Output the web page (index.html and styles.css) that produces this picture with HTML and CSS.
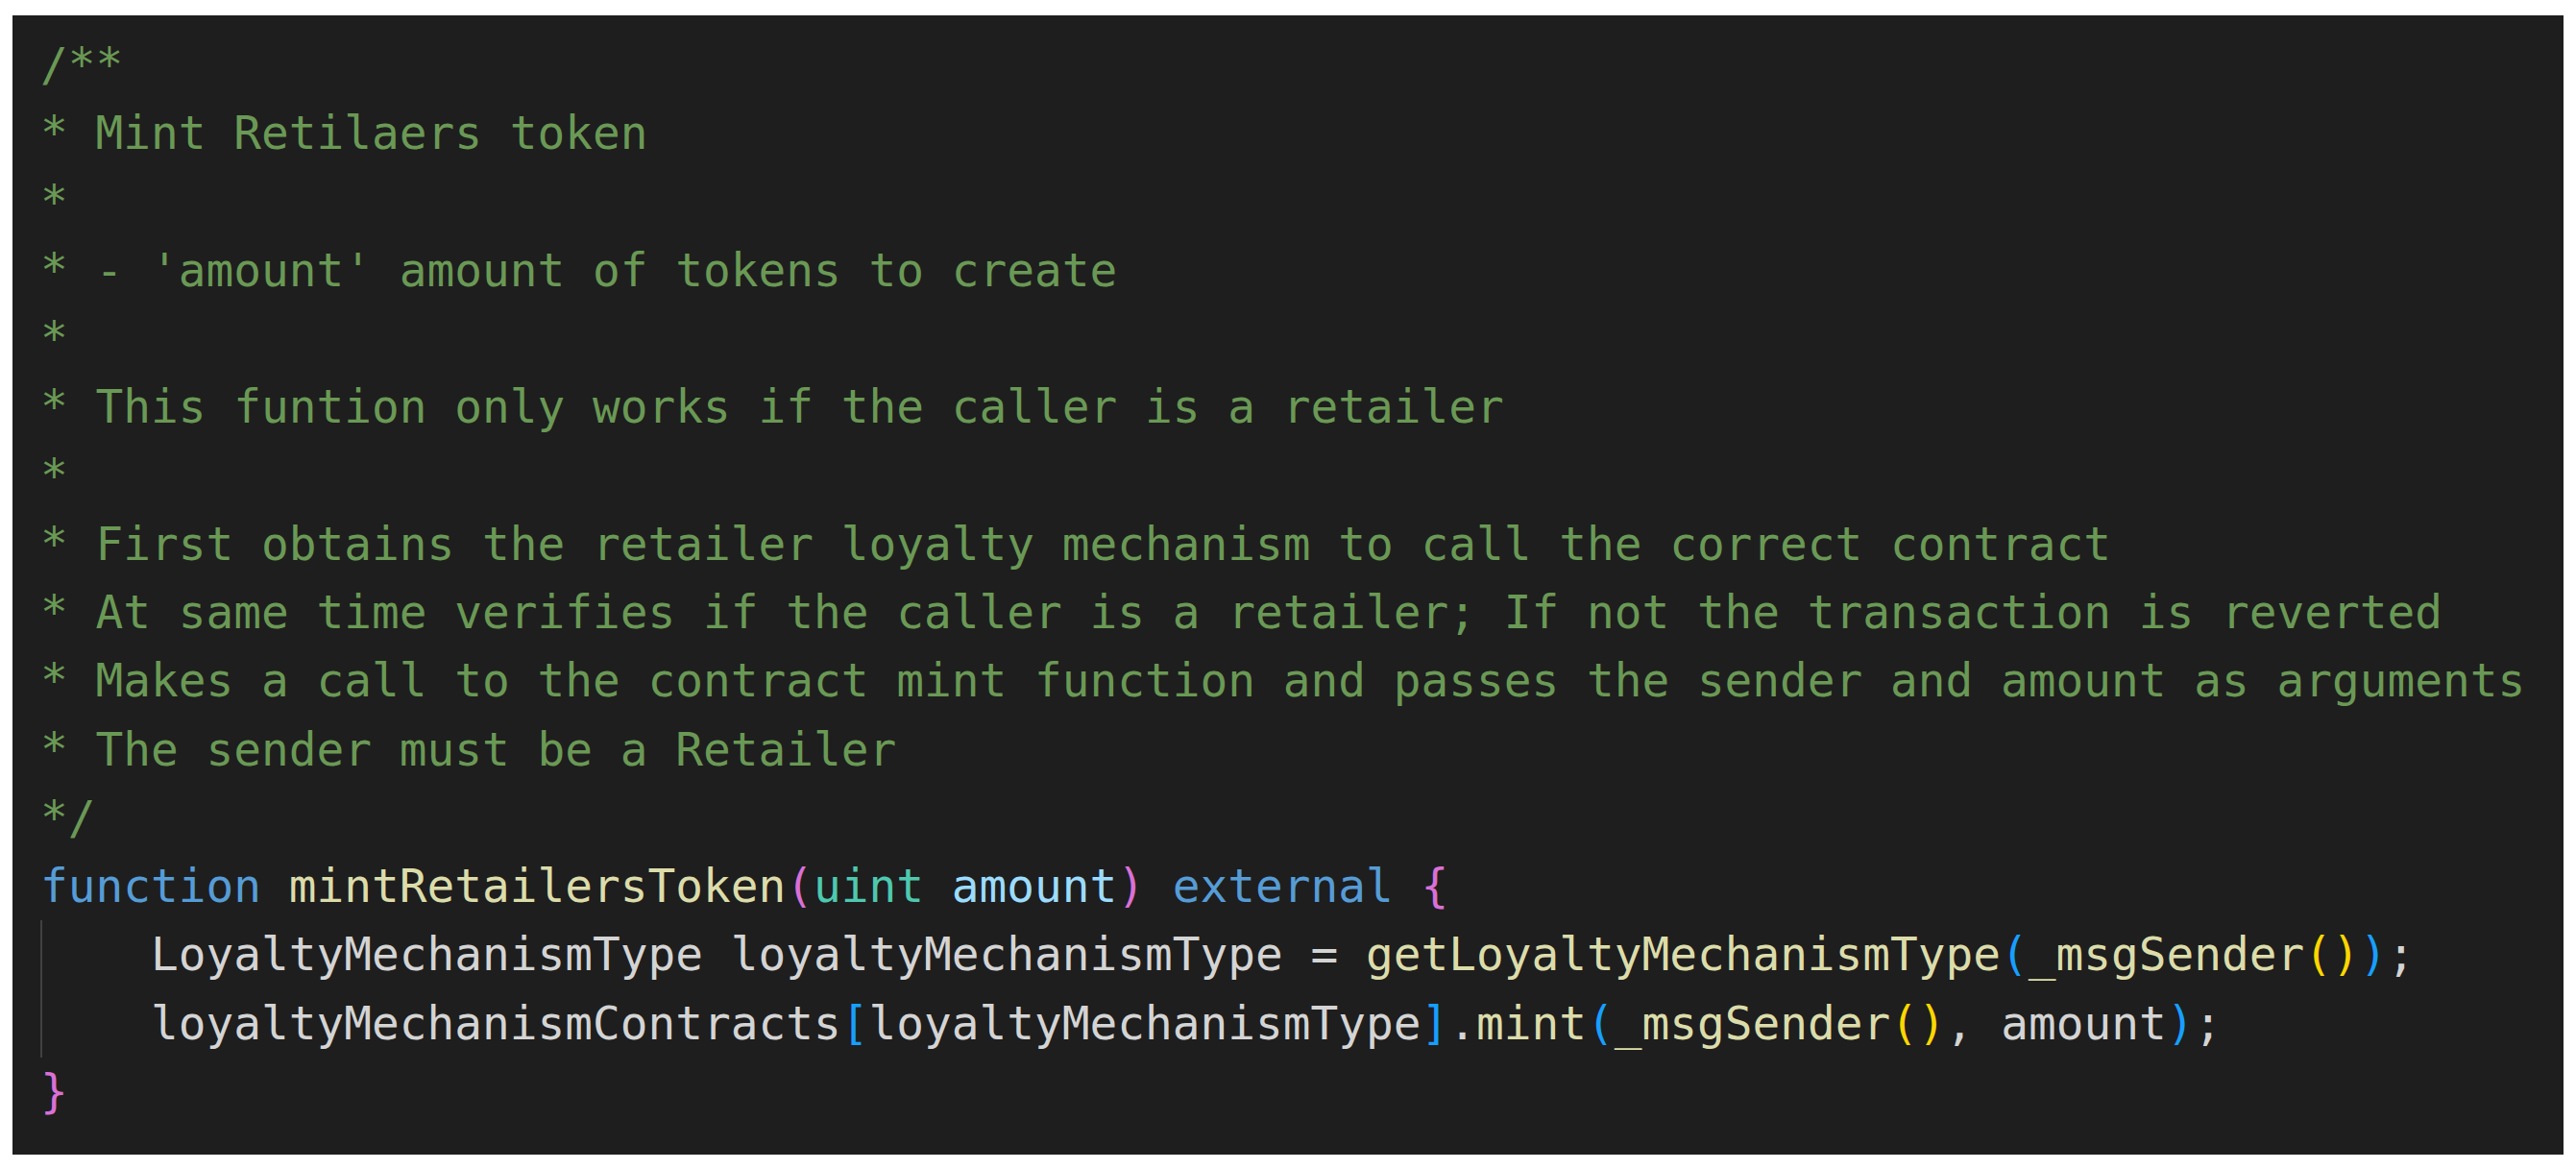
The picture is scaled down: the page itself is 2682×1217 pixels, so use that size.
FILE: index.html
```html
<!DOCTYPE html>
<html lang="en">
<head>
    <meta charset="UTF-8">
    <title>mintRetailersToken</title>
    <link rel="stylesheet" href="styles.css">
</head>
<body>

    <!-- Code snippet in a dark editor box -->
    <div class="editor">
        <div class="line cm">/**</div>
        <div class="line cm">* Mint Retilaers token</div>
        <div class="line cm">*</div>
        <div class="line cm">* - 'amount' amount of tokens to create</div>
        <div class="line cm">*</div>
        <div class="line cm">* This funtion only works if the caller is a retailer</div>
        <div class="line cm">*</div>
        <div class="line cm">* First obtains the retailer loyalty mechanism to call the correct contract</div>
        <div class="line cm">* At same time verifies if the caller is a retailer; If not the transaction is reverted</div>
        <div class="line cm">* Makes a call to the contract mint function and passes the sender and amount as arguments</div>
        <div class="line cm">* The sender must be a Retailer</div>
        <div class="line cm">*/</div>
        <div class="line"><span class="kw">function</span> <span class="fn">mintRetailersToken</span><span class="b2">(</span><span class="ty">uint</span> <span class="param">amount</span><span class="b2">)</span> <span class="kw">external</span> <span class="b2">{</span></div>
        <div class="block">
            <div class="line">    LoyaltyMechanismType loyaltyMechanismType = <span class="fn">getLoyaltyMechanismType</span><span class="b3">(</span><span class="fn">_msgSender</span><span class="b1">()</span><span class="b3">)</span>;</div>
            <div class="line">    loyaltyMechanismContracts<span class="b3">[</span>loyaltyMechanismType<span class="b3">]</span>.<span class="fn">mint</span><span class="b3">(</span><span class="fn">_msgSender</span><span class="b1">()</span>, amount<span class="b3">)</span>;</div>
        </div>
        <div class="line"><span class="b2">}</span></div>
    </div>

</body>
</html>
```

FILE: styles.css
```css
/* Page with a dark code box */
body {
    margin: 0;
    padding: 16px 13px 15px;
    background-color: #ffffff;
}

.editor {
    height: 1186px;
    box-sizing: border-box;
    padding: 16px 0 0 29px;
    background-color: #1e1e1e;
    color: #d4d4d4;
    font-family: "DejaVu Sans Mono", "Liberation Mono", monospace;
    font-size: 47.75px;
    line-height: 71.27px;
}

.line {
    white-space: pre;
}

/* indent guide for the function body */
.block {
    box-shadow: inset 2px 0 #404040;
}

.cm {
    color: #6a9955;
}

.kw {
    color: #569cd6;
}

.fn {
    color: #dcdcaa;
}

.ty {
    color: #4ec9b0;
}

.param {
    color: #9cdcfe;
}

/* bracket pair colours */
.b1 {
    color: #ffd700;
}

.b2 {
    color: #da70d6;
}

.b3 {
    color: #179fff;
}
```
